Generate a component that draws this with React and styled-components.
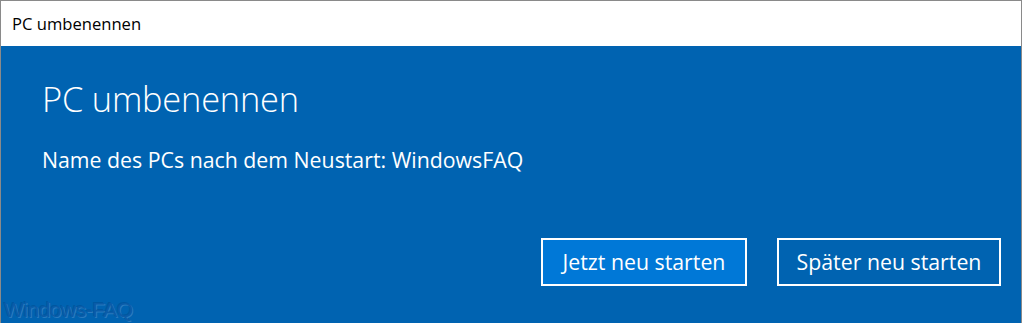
import React from 'react';
import styled, { createGlobalStyle } from 'styled-components';

const GlobalStyle = createGlobalStyle`
  html, body {
    margin: 0;
    padding: 0;
    background: #ffffff;
  }
  body {
    font-family: "Open Sans", "Noto Sans", "Liberation Sans", sans-serif;
  }
`;

const Window = styled.div`
  position: relative;
  display: flex;
  flex-direction: column;
  width: 1022px;
  height: 323px;
  box-sizing: border-box;
  border: 1px solid #8a8a8a;
  border-bottom: none;
  overflow: hidden;
`;

const TitleBar = styled.div`
  display: flex;
  align-items: center;
  height: 45px;
  padding-left: 11px;
  background: #ffffff;
  color: #000000;
  font-size: 16.6px;
  flex-shrink: 0;
`;

const Content = styled.div`
  flex: 1;
  display: flex;
  flex-direction: column;
  padding: 33px 20px 0 41px;
  background: #0063b1;
  color: #ffffff;
`;

const Heading = styled.h1`
  margin: 0;
  font-size: 34.4px;
  font-weight: 300;
  line-height: 40px;
  letter-spacing: -0.2px;
`;

const Message = styled.p`
  margin: 27px 0 0;
  font-size: 21.3px;
  font-weight: 400;
  line-height: 28px;
`;

const Actions = styled.div`
  display: flex;
  justify-content: flex-end;
  gap: 30px;
  margin-top: 64px;
`;

const Button = styled.button`
  box-sizing: border-box;
  height: 48px;
  width: ${({ $width }) => $width}px;
  border: 2px solid #ffffff;
  background: ${({ $primary }) => ($primary ? '#0078d7' : 'transparent')};
  color: #ffffff;
  font-family: inherit;
  font-size: 21.3px;
  padding: 0 0 2px;
  cursor: pointer;
`;

const Watermark = styled.div`
  position: absolute;
  left: 3px;
  bottom: 1px;
  font-family: "Liberation Sans", Arial, sans-serif;
  font-size: 21px;
  font-weight: 400;
  letter-spacing: -0.5px;
  color: #0b5ca8;
  text-shadow: 1px 1px 0 rgba(120, 170, 220, 0.35), -1px -1px 0 rgba(0, 40, 90, 0.2);
  pointer-events: none;
`;

export default function App() {
  return (
    <>
      <GlobalStyle />
      <Window>
        <TitleBar>PC umbenennen</TitleBar>
        <Content>
          <Heading>PC umbenennen</Heading>
          <Message>Name des PCs nach dem Neustart: WindowsFAQ</Message>
          <Actions>
            <Button $primary $width={206}>Jetzt neu starten</Button>
            <Button $width={224}>Später neu starten</Button>
          </Actions>
        </Content>
        <Watermark>Windows-FAQ</Watermark>
      </Window>
    </>
  );
}
